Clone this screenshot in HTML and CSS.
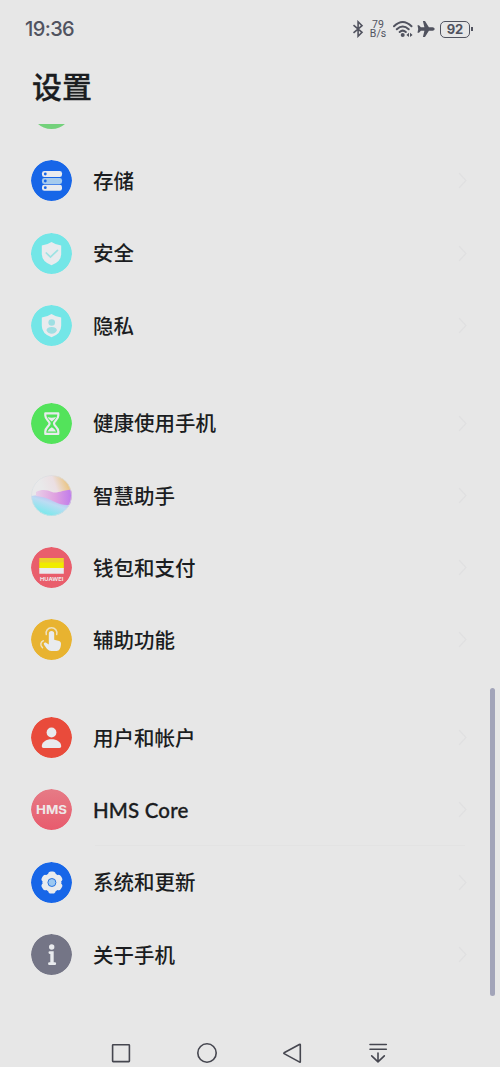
FILE: index.html
```
<!DOCTYPE html>
<html lang="zh-CN">
<head>
<meta charset="utf-8">
<title>设置</title>
<link rel="stylesheet" href="styles.css">
</head>
<body>
<div class="phone">
  <header class="status">
    <span class="clock">19:36</span>
    <div class="indicators">
      <svg class="bluetooth" width="12" height="18" viewBox="0 0 12 18"><path d="M1.500 5.200 10 12.400 6.100 16.200V1.800L10 5.600 1.500 12.800"/></svg>
      <div class="speed"><span>79</span><span>B/s</span></div>
      <svg class="wifi" width="20" height="18" viewBox="0 0 20 18"><path d="M1 6.200Q9.700-2.300 18.500 6.200M3.800 9.300Q9.700 3.700 15.700 9.300M6.700 12Q9.700 9.200 12.800 12"/><circle cx="9.700" cy="14.900" r="2"/><path class="solid" d="m16 12.700-2.600 2.200 2.600 2.200zM17 12.700l2.600 2.200-2.600 2.200z"/></svg>
      <svg class="plane" width="18" height="18" viewBox="0 0 18 18"><path d="M17.600 9c0-1-1-1.700-2-1.700h-3.700L8 .9H5.900l1.500 6.400H3.900L2 5.200H.5L1.200 9l-.7 3.800H2l1.900-2.100h3.500l-1.500 6.400H8l3.900-6.400h3.700c1 0 2-.7 2-1.700z"/></svg>
      <div class="battery"><span>92</span></div>
    </div>
  </header>
  <h1 class="title">设置</h1>
  <main class="viewport">
    <section class="group first">
      <div class="row"><i class="icon green"></i></div>
      <div class="row">
        <svg class="icon" viewBox="0 0 41 41"><circle class="blue" cx="20.500" cy="20.500" r="20.500"/><rect class="ink" x="11" y="11" width="20" height="6" rx="2.300"/><rect class="pale" x="11" y="18" width="20" height="6" rx="2.300"/><rect class="ink" x="11" y="24.700" width="20" height="6" rx="2.300"/><g class="blue"><circle cx="14.300" cy="14" r="1.400"/><circle cx="14.300" cy="21" r="1.400"/><circle cx="14.300" cy="27.700" r="1.400"/></g></svg>
        <span class="label">存储</span><svg class="arrow" viewBox="0 0 9 17"><path d="m1 1 7 7.500-7 7.500"/></svg>
      </div>
      <div class="row">
        <svg class="icon" viewBox="0 0 41 41"><circle class="cyan" cx="20.500" cy="20.500" r="20.500"/><path class="ink" d="M20.500 9q4.500 3 9.700 3.500v8.200q0 8-9.700 11.500-9.700-3.500-9.700-11.500v-8.200Q16 12 20.500 9z"/><path class="check" d="m15.300 20 4.200 4 7-6.700"/></svg>
        <span class="label">安全</span><svg class="arrow" viewBox="0 0 9 17"><path d="m1 1 7 7.500-7 7.500"/></svg>
      </div>
      <div class="row">
        <svg class="icon" viewBox="0 0 41 41"><circle class="cyan" cx="20.500" cy="20.500" r="20.500"/><path class="ink" d="M20.500 9q4.500 3 9.700 3.500v8.200q0 8-9.700 11.500-9.700-3.500-9.700-11.500v-8.200Q16 12 20.500 9z"/><g class="aqua"><circle cx="20.700" cy="17.500" r="3.300"/><path d="M15.500 25.500q0-3.500 5.200-3.500t5.200 3.500q-1.800 3.300-5.200 3.300t-5.200-3.300z"/></g></svg>
        <span class="label">隐私</span><svg class="arrow" viewBox="0 0 9 17"><path d="m1 1 7 7.500-7 7.500"/></svg>
      </div>
    </section>
    <section class="group">
      <div class="row">
        <svg class="icon" viewBox="0 0 41 41"><circle class="lime" cx="20.500" cy="20.500" r="20.500"/><path class="glass" d="M14.300 10.300h13v2.200c0 4.200-4.300 5.300-4.300 8s4.300 3.800 4.300 8v2.400h-13v-2.400c0-4.200 4.300-5.300 4.300-8s-4.300-3.800-4.300-8z"/><path class="ink" d="M16.500 14q4.200 1.600 8.600 0-1.200 2.600-4.300 4.600-3.100-2-4.300-4.600zM16.500 28.500q1.500-3 4.300-4.300 2.800 1.300 4.300 4.300z"/></svg>
        <span class="label">健康使用手机</span><svg class="arrow" viewBox="0 0 9 17"><path d="m1 1 7 7.500-7 7.500"/></svg>
      </div>
      <div class="row">
        <svg class="icon" viewBox="0 0 41 41">
          <defs>
            <linearGradient id="sky" x1=".35" y1=".5" x2="1" y2=".25"><stop offset="0" stop-color="#e9e9ea"/><stop offset=".45" stop-color="#ebdfe3"/><stop offset=".85" stop-color="#eac78c"/></linearGradient>
            <linearGradient id="sea" x1=".9" y1=".1" x2=".35" y2=".9"><stop offset="0" stop-color="#c0a0f0"/><stop offset=".5" stop-color="#bcdcf3"/><stop offset="1" stop-color="#7de8ec"/></linearGradient>
            <linearGradient id="wave"><stop offset="0" stop-color="#e8cfe8"/><stop offset=".5" stop-color="#dfa0e0"/><stop offset="1" stop-color="#b973ee"/></linearGradient>
            <clipPath id="orb"><circle cx="20.500" cy="20.500" r="20.500"/></clipPath>
            <filter id="soft"><feGaussianBlur stdDeviation=".7"/></filter>
          </defs>
          <g clip-path="url(#orb)"><path fill="url(#sky)" d="M0 0h41v41H0z"/><path fill="url(#sea)" d="M0 21q12-2 22 2t19 2v16H0z"/><path fill="url(#wave)" filter="url(#soft)" d="M5 17c6-3 11-2 16 0s10-2 23-3v15c-8 2-14 1-20-2s-10-5-19-6z"/></g>
          <circle class="rim" cx="20.500" cy="20.500" r="20"/>
        </svg>
        <span class="label">智慧助手</span><svg class="arrow" viewBox="0 0 9 17"><path d="m1 1 7 7.500-7 7.500"/></svg>
      </div>
      <div class="row">
        <svg class="icon" viewBox="0 0 41 41"><circle class="rose" cx="20.500" cy="20.500" r="20.500"/><path fill="#eed12b" d="M8.300 11h24.500v5H8.300z"/><path fill="#f0ec00" d="M8.300 15.500h24.500V22H8.300z"/><path class="ink" d="M8.300 21h24.500v5.700H8.300z"/><text class="brand" x="20.700" y="34.400" textLength="23.500" lengthAdjust="spacingAndGlyphs">HUAWEI</text></svg>
        <span class="label">钱包和支付</span><svg class="arrow" viewBox="0 0 9 17"><path d="m1 1 7 7.500-7 7.500"/></svg>
      </div>
      <div class="row">
        <svg class="icon" viewBox="0 0 41 41"><circle class="gold" cx="20.500" cy="20.500" r="20.500"/><path class="ink" d="M17.800 14.800a2.700 2.700 0 0 1 5.400 0v6l5 1.200q1.800.5 1.800 2.500c0 4-1.500 7.500-4.300 7.500h-5.500c-3 0-5.300-3.500-7.200-6.500-.8-1.800 1-2.700 2.500-1.600l2.300 1.500z"/><path class="ripple" d="M15.300 15.500a5.400 5.400 0 1 1 10.400 0M12.300 21.700c-3 1-3.300 5-.8 7"/></svg>
        <span class="label">辅助功能</span><svg class="arrow" viewBox="0 0 9 17"><path d="m1 1 7 7.500-7 7.500"/></svg>
      </div>
    </section>
    <section class="group">
      <div class="row">
        <svg class="icon" viewBox="0 0 41 41"><circle class="red" cx="20.500" cy="20.500" r="20.500"/><circle class="ink" cx="20.500" cy="15.500" r="4.900"/><path class="ink" d="M10.800 29.200c0-4.300 4.500-7 9.700-7s9.700 2.700 9.700 7c0 1.200-.7 1.700-1.700 1.700h-16c-1 0-1.700-.5-1.700-1.700z"/></svg>
        <span class="label">用户和帐户</span><svg class="arrow" viewBox="0 0 9 17"><path d="m1 1 7 7.500-7 7.500"/></svg>
      </div>
      <div class="row divided">
        <svg class="icon" viewBox="0 0 41 41"><defs><linearGradient id="hms" x2="0" y2="1"><stop stop-color="#e67b86"/><stop offset="1" stop-color="#e85b6d"/></linearGradient></defs><circle fill="url(#hms)" cx="20.500" cy="20.500" r="20.500"/><text class="hms" x="20.500" y="25.300" textLength="31" lengthAdjust="spacingAndGlyphs">HMS</text></svg>
        <span class="label latin">HMS Core</span><svg class="arrow" viewBox="0 0 9 17"><path d="m1 1 7 7.500-7 7.500"/></svg>
      </div>
      <div class="row">
        <svg class="icon" viewBox="0 0 41 41"><circle class="blue" cx="20.500" cy="20.500" r="20.500"/><g class="ink"><circle cx="20.900" cy="20.500" r="9.500"/><rect id="tooth" x="17.200" y="9.500" width="7.400" height="22" rx="2.800"/><use href="#tooth" transform="rotate(60 20.900 20.500)"/><use href="#tooth" transform="rotate(120 20.900 20.500)"/></g><circle class="hub" cx="20.900" cy="20.500" r="4"/></svg>
        <span class="label">系统和更新</span><svg class="arrow" viewBox="0 0 9 17"><path d="m1 1 7 7.500-7 7.500"/></svg>
      </div>
      <div class="row">
        <svg class="icon" viewBox="0 0 41 41"><circle class="slate" cx="20.500" cy="20.500" r="20.500"/><circle class="ink" cx="20.700" cy="13" r="2.700"/><path class="ink" d="M18.800 17.300h3.900v11h1.100a1.300 1.300 0 0 1 0 2.700h-5.400a1.300 1.300 0 0 1 0-2.700h.9v-8.400h-.5a1.300 1.300 0 0 1 0-2.600z"/></svg>
        <span class="label">关于手机</span><svg class="arrow" viewBox="0 0 9 17"><path d="m1 1 7 7.500-7 7.500"/></svg>
      </div>
    </section>
    <div class="scrollbar"></div>
  </main>
  <nav class="nav">
    <svg viewBox="0 0 24 24"><rect x="3.600" y="3.800" width="16.800" height="16.800" rx=".5"/></svg>
    <svg viewBox="0 0 24 24"><circle cx="12" cy="12" r="9.200"/></svg>
    <svg viewBox="0 0 24 24"><path d="M19.800 3.300q.5-.3.500.4v17q0 .7-.6.400L4.100 12.600q-.6-.4 0-.8z"/></svg>
    <svg viewBox="0 0 24 24"><path d="M4 3.500h16.300M4 8.200h16.300M12 12v8.500M5.700 14.900l6.300 6 6.300-6"/></svg>
  </nav>
</div>
</body>
</html>
```
FILE: styles.css
```
* { box-sizing: border-box; }
body {
  margin: 0;
  background: #e7e7e7;
  color: #1b1d21;
  font-family: "Noto Sans CJK SC", sans-serif;
}
.phone {
  height: 1067px;
  display: flex;
  flex-direction: column;
  overflow: hidden;
}
.status {
  height: 58px;
  padding: 0 30px 0 25px;
  display: flex;
  align-items: center;
  justify-content: space-between;
  color: #51535f;
}
.clock {
  font: 500 20px/20px Inter, sans-serif;
  letter-spacing: -.6px;
}
.indicators { display: flex; align-items: center; }
.indicators svg { fill: #51535f; }
.indicators .bluetooth { fill: none; stroke: #51535f; stroke-width: 1.600; margin-right: 6px; }
.indicators .wifi { margin: 0 4px 0 7px; }
.wifi path { fill: none; stroke: #51535f; stroke-width: 2; stroke-linecap: round; }
.wifi .solid { fill: #51535f; stroke: none; }
.speed {
  width: 16px;
  display: flex;
  flex-direction: column;
  align-items: center;
  font: 10.500px/10px Roboto, sans-serif;
}
.speed span { height: 9.500px; line-height: 9.500px; }
.battery {
  position: relative;
  width: 30px;
  height: 17px;
  margin-left: 5px;
  border: 1.500px solid #51535f;
  border-radius: 5px;
  display: flex;
  align-items: center;
  justify-content: center;
  font: 700 13px/15px Inter, sans-serif;
}
.battery span { padding-top: 1px; }
.battery::after {
  content: "";
  position: absolute;
  right: -4px;
  top: 5px;
  width: 2px;
  height: 4px;
  background: #51535f;
}
.title {
  margin: 0;
  height: 66px;
  padding-left: 32px;
  font-size: 30px;
  line-height: 54px;
  font-weight: 500;
  -webkit-text-stroke: .3px #1b1d21;
}
.viewport {
  position: relative;
  height: 896px;
  overflow: hidden;
}
.group { margin-bottom: 25.500px; }
.first { margin-top: -51.400px; }
.row {
  position: relative;
  height: 72.250px;
  padding: 0 33px 0 31px;
  display: flex;
  align-items: center;
}
.icon {
  display: block;
  width: 41px;
  height: 41px;
  flex: none;
  border-radius: 50%;
}
.label {
  flex: 1;
  margin-left: 21px;
  padding-bottom: 1.500px;
  font-size: 20.500px;
  line-height: 30px;
  font-weight: 500;
}
.latin {
  padding-bottom: 0;
  font-family: Lato, sans-serif;
  -webkit-text-stroke: .3px #1b1d21;
  letter-spacing: .15px;
}
.arrow { width: 9px; height: 17px; fill: none; stroke: #e0e0e1; stroke-width: 1.300; }
.divided::after {
  content: "";
  position: absolute;
  left: 95px;
  right: 35px;
  bottom: 0;
  height: 1px;
  background: #e3e3e3;
}
.green { background: #73d17b; }
.ink { fill: #e9ebee; }
.blue { fill: #1766e8; }
.pale { fill: #a5cbee; }
.cyan { fill: #73e6e7; }
.aqua { fill: #9fdfe3; }
.check { fill: none; stroke: #9ee3e3; stroke-width: 1.700; stroke-linecap: round; }
.lime { fill: #53e35b; }
.glass { fill: none; stroke: #e9ebee; stroke-width: 2.200; stroke-linejoin: round; }
.rim { fill: none; stroke: #d9dee2; stroke-width: .7; }
.rose { fill: #e95e6c; }
.brand { fill: #eee8e9; font: 700 5.200px Inter, sans-serif; text-anchor: middle; }
.gold { fill: #e8b330; }
.ripple { fill: none; stroke: #efe2c0; stroke-width: 1.500; stroke-linecap: round; }
.red { fill: #e94b3b; }
.hms { fill: #eee8e9; font: 700 12px Inter, sans-serif; text-anchor: middle; }
.hub { fill: #9cc8f1; stroke: #2873df; stroke-width: 1; }
.slate { fill: #747586; }
.scrollbar {
  position: absolute;
  right: 5px;
  top: 564px;
  width: 5px;
  height: 308px;
  border-radius: 3px;
  background: #a2a4b9;
}
.nav {
  padding: 20.500px 110px 0 109px;
  display: flex;
  justify-content: space-between;
}
.nav svg {
  width: 24px;
  height: 24px;
  fill: none;
  stroke: #45464f;
  stroke-width: 1.600;
  stroke-linecap: round;
  stroke-linejoin: round;
}
```
